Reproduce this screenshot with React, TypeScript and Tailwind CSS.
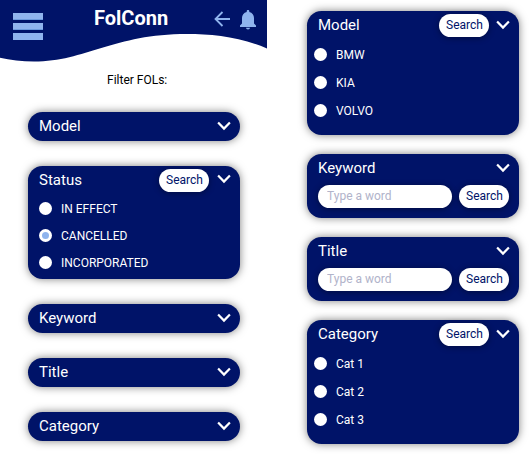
import type { ReactNode } from "react";

function Chevron({ raised = false }: { raised?: boolean }) {
  return (
    <svg
      className={`h-[10px] w-[14px] shrink-0 ${raised ? "mb-[3px]" : "mb-px"}`}
      viewBox="0 0 14 10"
      fill="none"
    >
      <path d="M1.1 1.4L7 7.6L12.9 1.4" stroke="white" strokeWidth="2.2" />
    </svg>
  );
}

function SearchButton() {
  return (
    <button className="h-[23px] w-[50px] shrink-0 rounded-full bg-white pl-px text-center text-[12px] leading-[23px] text-[#001368] shadow-[0_1px_6px_rgba(0,0,0,0.4)]">
      Search
    </button>
  );
}

function Card({
  title,
  size,
  search = false,
  raised = false,
  actions = "mr-[7px]",
  children,
}: {
  title: string;
  size: string;
  search?: boolean;
  raised?: boolean;
  actions?: string;
  children?: ReactNode;
}) {
  return (
    <section
      className={`${size} w-[212px] shrink-0 rounded-[14.5px] bg-[#001368] text-white shadow-[0_0_9px_rgba(0,0,0,0.5)]`}
    >
      <div className="flex h-[29px] items-center pr-[9px] pl-[11px]">
        <h2 className="flex-1 text-[15px] leading-[29px]">{title}</h2>
        {search && (
          <div className={`flex ${actions}`}>
            <SearchButton />
          </div>
        )}
        <Chevron raised={raised} />
      </div>
      {children}
    </section>
  );
}

function Options({
  items,
  selected,
  layout,
}: {
  items: string[];
  selected?: string;
  layout: string;
}) {
  return (
    <ul className={`flex flex-col ${layout}`}>
      {items.map((item) => (
        <li key={item} className="flex h-[13px] items-center">
          <span className="flex size-[13px] shrink-0 items-center justify-center rounded-full bg-white">
            {item === selected && <span className="size-[7px] rounded-full bg-[#8fb4ee]" />}
          </span>
          <span className="pt-[2px] text-[12px] leading-[13px]">{item}</span>
        </li>
      ))}
    </ul>
  );
}

function WordSearch() {
  return (
    <div className="mt-[2px] flex gap-[7px] pl-[11px]">
      <input
        className="h-[23px] w-[134px] rounded-full bg-white px-[9px] pb-[2px] text-[12px] text-[#001368] outline-none shadow-[0_1px_6px_rgba(0,0,0,0.4)] placeholder:text-[#b1b3ca]"
        placeholder="Type a word"
      />
      <SearchButton />
    </div>
  );
}

function Header() {
  return (
    <header className="relative h-[64px] w-[267px]">
      <svg className="absolute inset-0 h-[64px] w-[267px]" viewBox="0 0 267 64">
        <path
          d="M0 0H267V48.5C241 37 212 34 187 34C113 34 86 61.5 34 61.5C22 61.5 10 60 0 57.7Z"
          fill="#001368"
        />
      </svg>
      <div className="relative flex pl-[13px]">
        <div className="flex w-[30px] flex-col gap-[3px] pt-[13px]">
          <span className="h-[7px] border-b border-[#6d9add] bg-[#8fb4ee]" />
          <span className="h-[7px] border-b border-[#6d9add] bg-[#8fb4ee]" />
          <span className="h-[7px] bg-[#8fb4ee]" />
        </div>
        <h1 className="ml-[51px] w-[120px] text-[20px] leading-[37px] font-bold text-white">FolConn</h1>
        <svg className="mt-[11px] h-[16px] w-[16px]" viewBox="0 0 16 16" fill="none">
          <path d="M16 8H1.5M8.5 1L1.5 8L8.5 15" stroke="#8fb4ee" strokeWidth="1.8" />
        </svg>
        <svg className="mt-[10px] ml-[10px] h-[20px] w-[16px]" viewBox="0 0 16 20" fill="#8fb4ee">
          <path d="M6.7 2V1.2a1.3 1.3 0 0 1 2.6 0V2C12.3 2.7 14 5 14 8V13.5L16 15.5V17H0V15.5L2 13.5V8C2 5 3.7 2.7 6.7 2ZM6 17.8H10A2 1.8 0 0 1 6 17.8Z" />
        </svg>
      </div>
    </header>
  );
}

export default function App() {
  return (
    <main className="flex h-[456px] w-[529px] overflow-hidden bg-white font-['Roboto',sans-serif]">
      <div className="w-[267px] shrink-0">
        <Header />
        <p className="ml-[107px] h-[48px] text-[12px] leading-[32px] text-black">Filter FOLs:</p>
        <div className="flex flex-col gap-[25px] pl-[28px]">
          <Card title="Model" size="h-[29px]" />
          <Card title="Status" size="h-[113px]" search raised actions="mr-[8px]">
            <Options
              items={["IN EFFECT", "CANCELLED", "INCORPORATED"]}
              selected="CANCELLED"
              layout="mt-[7px] ml-[11px] gap-[14px] [&>li]:gap-[9px]"
            />
          </Card>
          <Card title="Keyword" size="h-[29px]" />
          <Card title="Title" size="h-[29px]" />
          <Card title="Category" size="h-[29px]" />
        </div>
      </div>
      <div className="flex flex-col gap-[19px] pt-[11px] pl-[40px]">
        <Card title="Model" size="h-[124px]" search>
          <Options
            items={["BMW", "KIA", "VOLVO"]}
            layout="mt-[8px] ml-[7px] gap-[15px] [&>li]:gap-[9px]"
          />
        </Card>
        <Card title="Keyword" size="h-[64px]">
          <WordSearch />
        </Card>
        <Card title="Title" size="h-[64px]">
          <WordSearch />
        </Card>
        <Card title="Category" size="h-[124px]" search>
          <Options
            items={["Cat 1", "Cat 2", "Cat 3"]}
            layout="mt-[8px] ml-[7px] gap-[15px] [&>li]:gap-[9px]"
          />
        </Card>
      </div>
    </main>
  );
}
